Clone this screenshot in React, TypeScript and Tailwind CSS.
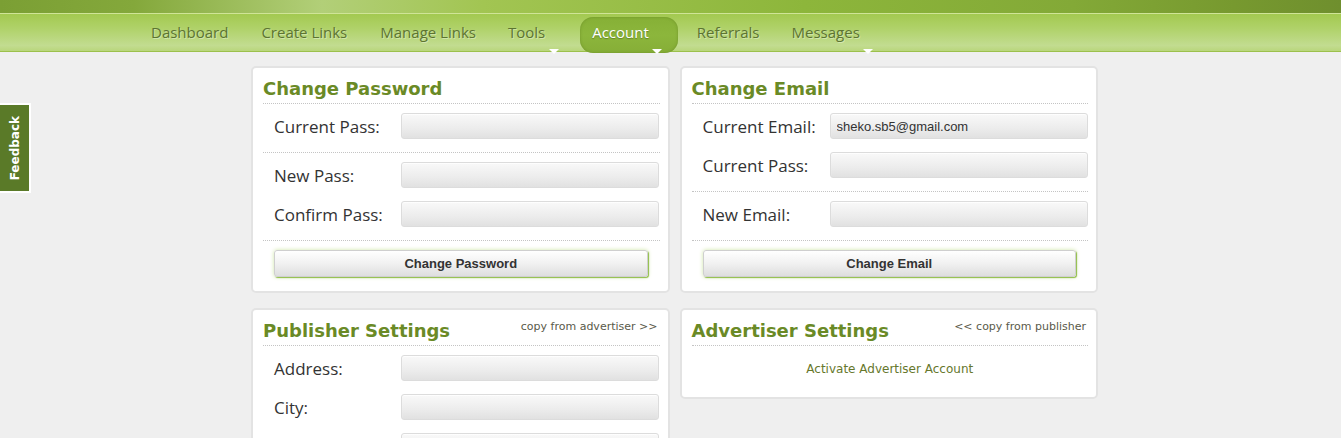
import React from 'react';

function Field({ label, value }: { label: string; value?: string }) {
  return (
    <div className="flex h-[26px] items-center">
      <label className="w-[138px] shrink-0 pt-[2px] pl-[11px] font-['Open_Sans',sans-serif] text-[17px] leading-[26px] text-[#333]">
        {label}
      </label>
      <input
        type="text"
        readOnly
        defaultValue={value}
        className="h-[26px] w-[258px] rounded-[3px] border border-[#dcdcdc] bg-[linear-gradient(180deg,#f9f9f9_0%,#ececec_60%,#e1e1e1_100%)] pl-[6px] font-['Liberation_Sans',Arial,sans-serif] text-[13px] text-[#333] shadow-[inset_0_1px_1px_rgba(255,255,255,0.8)] outline-none"
      />
    </div>
  );
}

function Section({ children, last }: { children: React.ReactNode; last?: boolean }) {
  return (
    <div
      className={
        last
          ? 'flex flex-col gap-[13px] pt-[9px] pb-[14px]'
          : 'flex flex-col gap-[13px] border-b border-dotted border-[#c4c4c4] pt-[9px] pb-[13px]'
      }
    >
      {children}
    </div>
  );
}

function Button({ children }: { children: React.ReactNode }) {
  return (
    <div className="pl-[11px] pr-[12px]">
      <button className="h-[27px] w-full rounded-[3px] border border-[#cfcfcf] bg-[linear-gradient(180deg,#ffffff_0%,#f1f1f1_50%,#dedede_100%)] font-['Liberation_Sans',Arial,sans-serif] text-[13px] font-bold text-[#333] shadow-[1px_1px_1px_#8fbd45,0_0_4px_#cfe6a6]">
        {children}
      </button>
    </div>
  );
}

function Panel({
  title,
  extra,
  children,
}: {
  title: string;
  extra?: string;
  children: React.ReactNode;
}) {
  return (
    <div className="rounded-[5px] border-2 border-[#e3e3e3] bg-white pl-[10px] pr-[8px]">
      <div className="flex items-start justify-between border-b border-dotted border-[#c4c4c4] pt-[10px] pb-[3px]">
        <h2 className="font-['DejaVu_Sans',Verdana,sans-serif] text-[18px] font-bold leading-[22px] text-[#6a8a26]">
          {title}
        </h2>
        {extra && (
          <span className="pr-[2px] font-['DejaVu_Sans',Verdana,sans-serif] text-[11px] leading-[13px] text-[#5a5a4a]">
            {extra}
          </span>
        )}
      </div>
      {children}
    </div>
  );
}

const navText =
  "font-['Open_Sans',sans-serif] text-[15px] text-[#5c7431] [text-shadow:1px_1px_0_rgba(255,255,255,0.35)]";

export default function App() {
  return (
    <div className="relative h-[438px] overflow-hidden bg-[#efefef]">
      {/* top strip */}
      <div className="h-[13px] bg-[linear-gradient(90deg,#7b9f34_0%,#84a83b_10%,#b2cf78_24%,#a2c552_36%,#8db63b_60%,#83a937_80%,#77992f_92%,#6f8f2e_100%)]" />
      <div className="h-px bg-[#cfe497]" />

      {/* nav */}
      <nav className="relative h-[38px] border-b border-[#9cc04c] bg-[linear-gradient(180deg,#a3c950_0%,#b0d26a_40%,#c2dc90_85%,#b9d67c_100%)]">
        <div className="flex h-full items-start pl-[151px]">
          <span className={`${navText} mt-[7px]`}>Dashboard</span>
          <span className={`${navText} mt-[7px] ml-[33px]`}>Create Links</span>
          <span className={`${navText} mt-[7px] ml-[33px]`}>Manage Links</span>
          <span className={`${navText} relative mt-[7px] ml-[32px] flex h-[31px] items-start`}>
            Tools
            <span className="absolute right-[-14px] bottom-[-2px] h-0 w-0 border-x-[5px] border-t-[5px] border-x-transparent border-t-white" />
          </span>
          <span className="relative mt-[3px] ml-[35px] flex h-[36px] items-start rounded-[13px] bg-[linear-gradient(180deg,#86b036_0%,#8cb63c_50%,#86ae37_100%)] pt-[4px] pr-[29px] pl-[12px] shadow-[inset_0_0_3px_rgba(80,110,20,0.45)]">
            <span className="font-['Open_Sans',sans-serif] text-[15px] text-white [text-shadow:0_1px_1px_rgba(60,80,20,0.5)]">
              Account
            </span>
            <span className="absolute right-[16px] bottom-[-1px] h-0 w-0 border-x-[5px] border-t-[5px] border-x-transparent border-t-white" />
          </span>
          <span className={`${navText} mt-[7px] ml-[19px]`}>Referrals</span>
          <span className={`${navText} relative mt-[7px] ml-[32px] flex h-[31px] items-start`}>
            Messages
            <span className="absolute right-[-13px] bottom-[-2px] h-0 w-0 border-x-[5px] border-t-[5px] border-x-transparent border-t-white" />
          </span>
        </div>
      </nav>

      {/* feedback tab */}
      <div className="absolute top-[103px] left-0 flex h-[90px] w-[31px] items-center justify-center border-y-2 border-r-2 border-white bg-[#5a7a28]">
        <span className="rotate-180 font-['DejaVu_Sans',Verdana,sans-serif] text-[12px] font-bold text-white [writing-mode:vertical-rl]">
          Feedback
        </span>
      </div>

      {/* content */}
      <div className="pt-[14px] pl-[251px]">
        <div className="grid w-[847px] grid-cols-2 items-start gap-x-[10px] gap-y-[15px]">
          <Panel title="Change Password">
            <Section>
              <Field label="Current Pass:" />
            </Section>
            <Section>
              <Field label="New Pass:" />
              <Field label="Confirm Pass:" />
            </Section>
            <Section last>
              <Button>Change Password</Button>
            </Section>
          </Panel>

          <Panel title="Change Email">
            <Section>
              <Field label="Current Email:" value="sheko.sb5@gmail.com" />
              <Field label="Current Pass:" />
            </Section>
            <Section>
              <Field label="New Email:" />
            </Section>
            <Section last>
              <Button>Change Email</Button>
            </Section>
          </Panel>

          <Panel title="Publisher Settings" extra="copy from advertiser >>">
            <Section>
              <Field label="Address:" />
              <Field label="City:" />
              <Field label="" />
            </Section>
          </Panel>

          <Panel title="Advertiser Settings" extra="<< copy from publisher">
            <div className="pt-[15px] pb-[20px] text-center font-['DejaVu_Sans',Verdana,sans-serif] text-[12px] leading-[16px] text-[#66772c]">
              Activate Advertiser Account
            </div>
          </Panel>
        </div>
      </div>
    </div>
  );
}
